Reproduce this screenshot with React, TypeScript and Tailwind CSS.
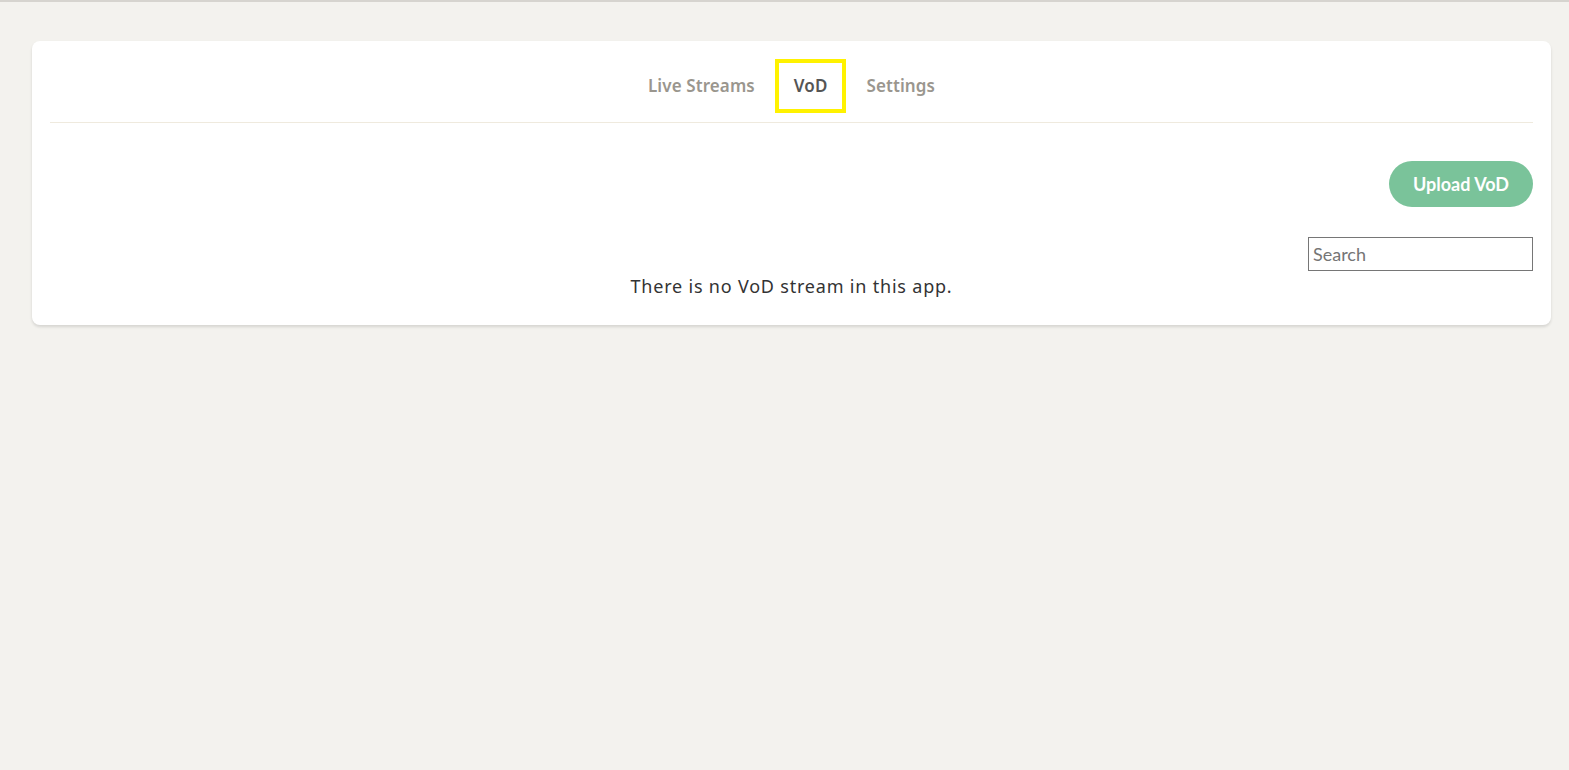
import React from "react";

export default function App() {
  return (
    <div className="min-h-[770px] w-full bg-[#f3f2ee] border-t-2 border-[#d6d4cf] pt-[39px]" style={{ fontFamily: '"Noto Sans", sans-serif' }}>
      <div className="ml-8 mr-[18px] rounded-lg bg-white px-[18px] pt-[18px] pb-[27px] shadow-[0_2px_3px_rgba(0,0,0,0.12)]">
        <div className="flex justify-center items-center border-b border-[#efeade] pb-[9px]">
          <div className="flex items-center gap-[2px]">
            <div className="h-[54px] px-[14px] border-4 border-transparent flex items-center text-[17px] font-semibold tracking-[0.1px] text-[#9a968e]">Live Streams</div>
            <div className="h-[54px] px-[15px] border-4 border-[#fff200] flex items-center text-[17px] font-semibold tracking-[0.1px] text-[#555]">VoD</div>
            <div className="h-[54px] px-[14px] border-4 border-transparent flex items-center text-[17px] font-semibold tracking-[0.1px] text-[#9a968e]">Settings</div>
          </div>
        </div>
        <div className="flex justify-end mt-[38px]">
          <button className="h-[46px] px-6 rounded-full bg-[#7ac39a] text-white text-[18px] font-bold" style={{ fontFamily: 'Lato, sans-serif' }}>Upload VoD</button>
        </div>
        <div className="flex justify-end mt-[30px]">
          <input placeholder="Search" className="w-[225px] h-[34px] border border-[#767676] px-1 text-[18px] placeholder:text-[#757575] outline-none" style={{ fontFamily: 'Lato, sans-serif' }} />
        </div>
        <div className="text-center text-[18px] tracking-[0.8px] text-[#333] mt-[3px] leading-[24px]">There is no VoD stream in this app.</div>
      </div>
    </div>
  );
}
